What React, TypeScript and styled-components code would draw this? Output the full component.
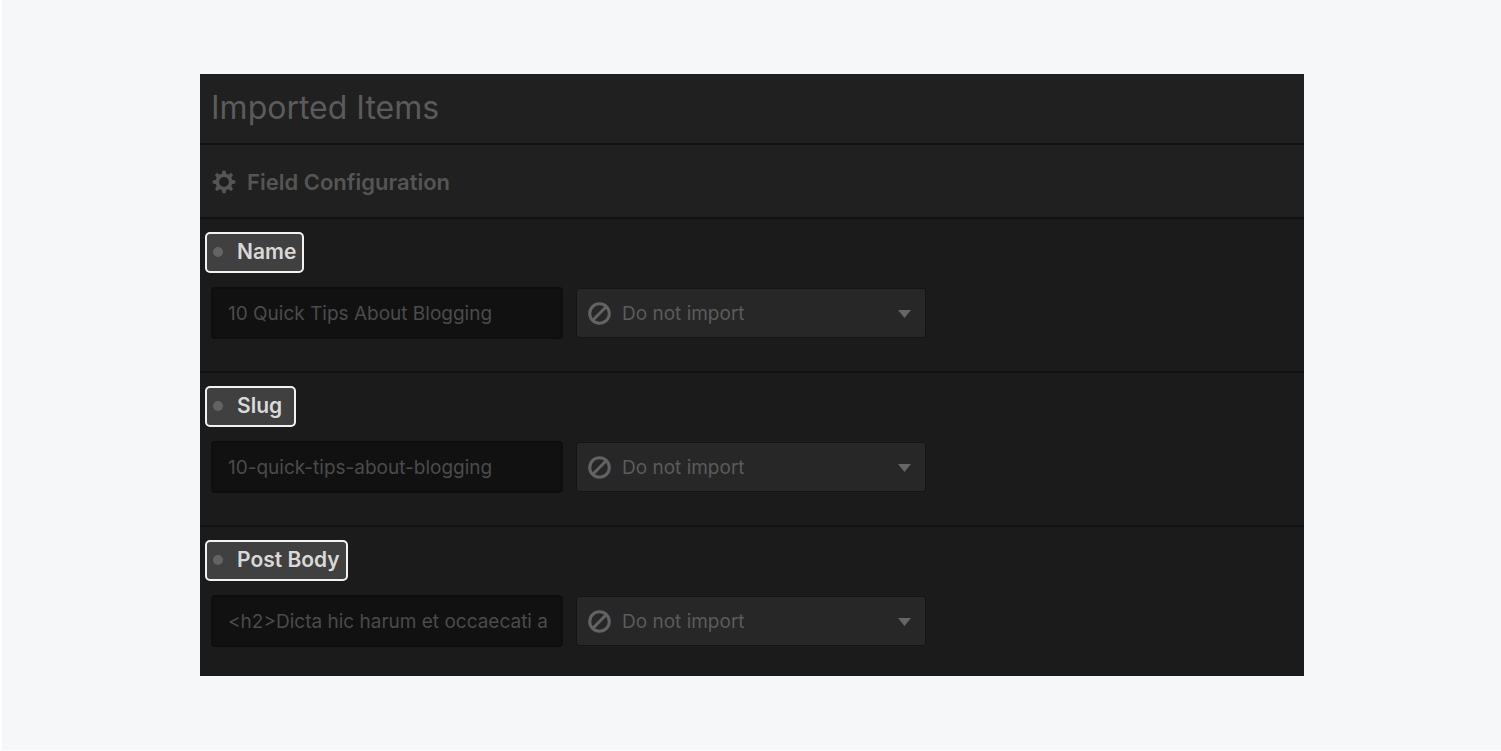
import React from "react";
import styled, { createGlobalStyle } from "styled-components";

const GlobalStyle = createGlobalStyle`
  *, *::before, *::after { box-sizing: border-box; }
  body { margin: 0; background: #ffffff; font-family: Inter, "Liberation Sans", sans-serif; }
`;

const Page = styled.main`
  min-height: calc(100vh - 1px);
  margin-left: 2px;
  padding: 74px 197px 74px 198px;
  background: #f6f7f9;
`;

const Panel = styled.section`
  background: #1b1b1b;
  color: #5b5b5b;
`;

const Header = styled.header`
  display: flex;
  align-items: center;
  height: 71px;
  padding: 0 11px 2px;
  border-bottom: 2px solid #121212;
  background: #202020;
`;

const Title = styled.h1`
  margin: 0;
  font-size: 32px;
  line-height: 40px;
  font-weight: 400;
`;

const SubHeader = styled(Header)`
  gap: 11px;
  height: 74px;
  padding: 2px 12px 0;
`;

const SubTitle = styled.h2`
  margin: 0;
  font-size: 22px;
  line-height: 28px;
  font-weight: 600;
  color: #555555;
`;

const Row = styled.div`
  padding: 13px 5px 32px;
  border-bottom: 2px solid #121212;

  &:last-child {
    padding-bottom: 29px;
    border-bottom: 0;
  }
`;

const Tag = styled.label`
  display: inline-flex;
  align-items: center;
  gap: 14px;
  min-width: 91px;
  height: 41px;
  padding: 0 6px 1px;
  border: 2px solid #f2f2f2;
  border-radius: 5px;
  background: #404040;
  color: #d9d9d9;
  font-size: 21px;
  line-height: 28px;
  font-weight: 600;
  vertical-align: top;
`;

const Dot = styled.span`
  width: 10px;
  height: 10px;
  border-radius: 50%;
  background: #636363;
`;

const Controls = styled.div`
  display: flex;
  align-items: center;
  gap: 13px;
  margin-top: 14px;
  padding-left: 6px;
`;

const SampleInput = styled.input`
  width: 352px;
  height: 52px;
  padding: 0 14px 0 15px;
  border: 2px solid #0e0e0e;
  border-radius: 4px;
  outline: 0;
  background: #111111;
  color: #4b4b4b;
  font: 400 19px/28px Inter, "Liberation Sans", sans-serif;
`;

const SelectWrap = styled.div`
  position: relative;
  width: 350px;
`;

const Select = styled.select`
  display: block;
  width: 100%;
  height: 50px;
  padding: 2px 40px 0 45px;
  border: 1px solid #151515;
  border-radius: 3px;
  outline: 0;
  appearance: none;
  background: #272727;
  color: #5b5b5b;
  font: 400 19px/28px Inter, "Liberation Sans", sans-serif;
`;

const BanMark = styled.svg`
  position: absolute;
  top: 14px;
  left: 12px;
  pointer-events: none;
`;

const Caret = styled.svg`
  position: absolute;
  top: 22px;
  right: 15px;
  pointer-events: none;
`;

const GearIcon = () => (
  <svg width="24" height="24" viewBox="-12 -12 24 24" aria-hidden="true">
    <circle r="6.7" fill="none" stroke="#555555" strokeWidth="3.6" />
    {[0, 45, 90, 135, 180, 225, 270, 315].map((angle) => (
      <path
        key={angle}
        d="M-2.2-7.4L-1.6-11.1Q0-11.9 1.6-11.1L2.2-7.4Z"
        fill="#555555"
        transform={`rotate(${angle})`}
      />
    ))}
  </svg>
);

const fields = [
  { id: "name", label: "Name", sample: "10 Quick Tips About Blogging" },
  { id: "slug", label: "Slug", sample: "10-quick-tips-about-blogging" },
  { id: "post-body", label: "Post Body", sample: "<h2>Dicta hic harum et occaecati aut" },
];

const FieldRow = ({ id, label, sample }: { id: string; label: string; sample: string }) => (
  <Row>
    <Tag htmlFor={id}>
      <Dot />
      {label}
    </Tag>
    <Controls>
      <SampleInput id={id} type="text" defaultValue={sample} />
      <SelectWrap>
        <Select aria-label={`${label} import setting`} defaultValue="none">
          <option value="none">Do not import</option>
        </Select>
        <BanMark width="23" height="23" viewBox="0 0 23 23" fill="none" stroke="#636363" strokeWidth="3" aria-hidden="true">
          <circle cx="11.5" cy="11.5" r="9.8" />
          <path d="M4.8 18.2L18.2 4.8" />
        </BanMark>
        <Caret width="13" height="8" viewBox="0 0 13 8" fill="#666666" aria-hidden="true">
          <path d="M0 0H13L6.5 8Z" />
        </Caret>
      </SelectWrap>
    </Controls>
  </Row>
);

export default function App() {
  return (
    <>
      <GlobalStyle />
      <Page>
        <Panel>
          <Header>
            <Title>Imported Items</Title>
          </Header>
          <SubHeader as="div">
            <GearIcon />
            <SubTitle>Field Configuration</SubTitle>
          </SubHeader>
          <div>
            {fields.map((field) => (
              <FieldRow key={field.id} {...field} />
            ))}
          </div>
        </Panel>
      </Page>
    </>
  );
}
